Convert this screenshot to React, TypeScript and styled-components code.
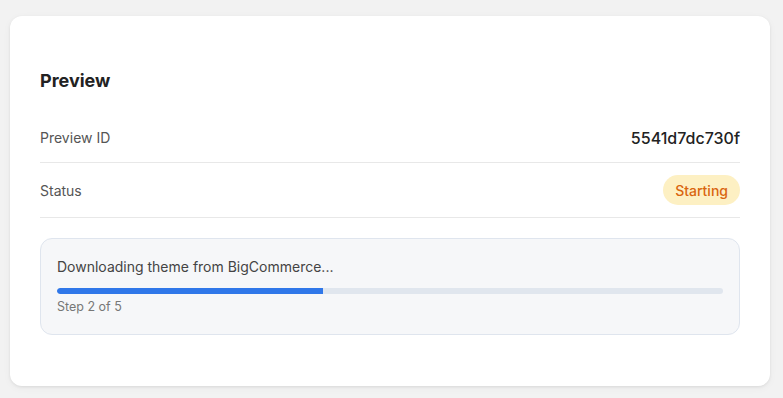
import styled, { createGlobalStyle } from 'styled-components';

const GlobalStyle = createGlobalStyle`
  body {
    margin: 0;
    background: #f2f2f2;
    font-family: Inter, "Noto Sans", sans-serif;
    -webkit-font-smoothing: antialiased;
  }
`;

const Page = styled.div`
  padding: 16px 10px;
`;

const Card = styled.div`
  width: 760px;
  box-sizing: border-box;
  background: #ffffff;
  border-radius: 12px;
  padding: 51px 30px 51px;
  box-shadow: 0 1px 3px rgba(0, 0, 0, 0.08), 0 2px 8px rgba(0, 0, 0, 0.04);
`;

const Title = styled.h2`
  margin: 0 0 19px;
  font-size: 18px;
  line-height: 27px;
  font-weight: 700;
  color: #222;
`;

const Row = styled.div`
  display: flex;
  justify-content: space-between;
  align-items: center;
  padding: 12px 0;
  min-height: 25px;
  border-bottom: 1px solid #e8e8e8;
`;

const Label = styled.span`
  font-size: 14px;
  color: #555;
`;

const Value = styled.span`
  font-size: 16px;
  font-weight: 500;
  color: #222;
`;

const Badge = styled.span<{ $bg: string; $fg: string }>`
  display: inline-flex;
  align-items: center;
  height: 30px;
  padding: 0 12px;
  border-radius: 999px;
  background: ${(p) => p.$bg};
  color: ${(p) => p.$fg};
  font-size: 14px;
  font-weight: 500;
`;

const ProgressBox = styled.div`
  margin-top: 20px;
  padding: 18px 16px 19px;
  background: #f6f7f9;
  border: 1px solid #dfe5ee;
  border-radius: 12px;
`;

const Message = styled.div`
  font-size: 14px;
  line-height: 20px;
  color: #444;
`;

const Track = styled.div`
  margin-top: 11px;
  height: 6px;
  border-radius: 3px;
  background: #e0e6ee;
  overflow: hidden;
`;

const Fill = styled.div`
  height: 100%;
  background: #2f77e9;
  border-radius: 3px 0 0 3px;
`;

const StepText = styled.div`
  margin-top: 5px;
  font-size: 12.5px;
  line-height: 16px;
  color: #777;
`;

export default function App() {
  const step = 2;
  const total = 5;
  const percent = (step / total) * 100;

  return (
    <Page>
      <GlobalStyle />
      <Card>
        <Title>Preview</Title>
        <Row>
          <Label>Preview ID</Label>
          <Value>5541d7dc730f</Value>
        </Row>
        <Row>
          <Label>Status</Label>
          <Badge $bg="#fdf0c3" $fg="#d9650f">Starting</Badge>
        </Row>
        <ProgressBox>
          <Message>Downloading theme from BigCommerce...</Message>
          <Track>
            <Fill style={{ width: `${percent}%` }} />
          </Track>
          <StepText>
            Step {step} of {total}
          </StepText>
        </ProgressBox>
      </Card>
    </Page>
  );
}
